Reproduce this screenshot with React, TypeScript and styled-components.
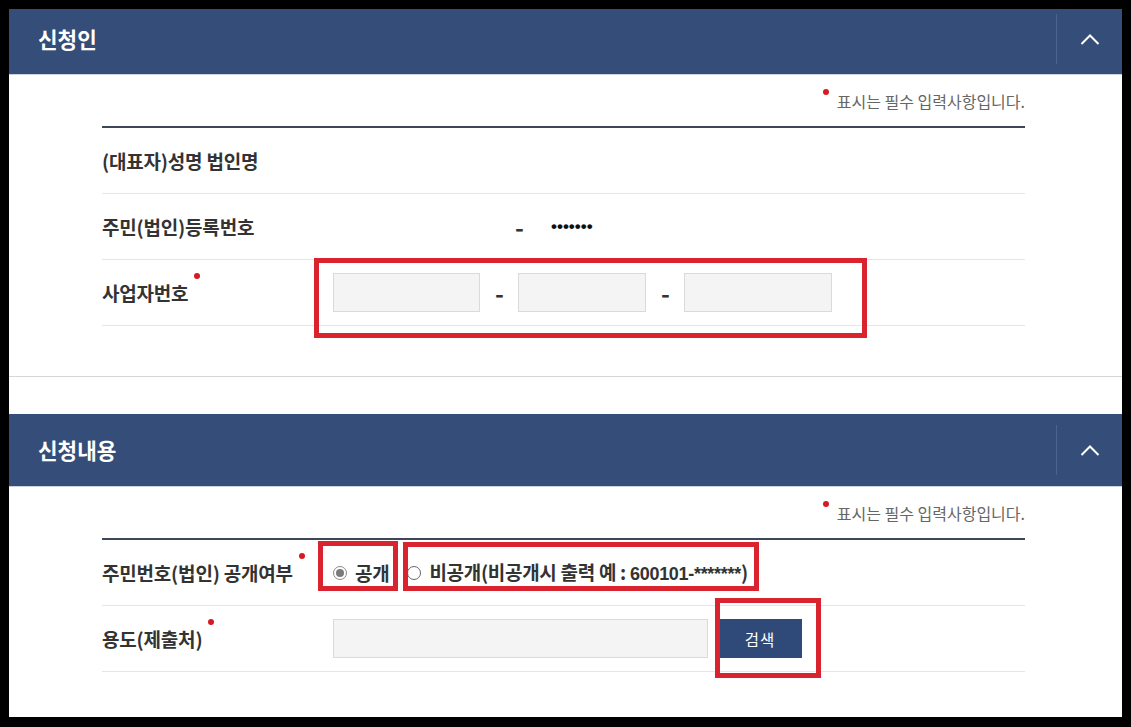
import React from "react";
import styled, { createGlobalStyle } from "styled-components";

const GlobalStyle = createGlobalStyle`
  html, body { margin: 0; padding: 0; background: #000; }
  body { font-family: "Noto Sans CJK KR", "Noto Sans", sans-serif; }
  * { box-sizing: border-box; }
`;

const Frame = styled.div`
  width: 1131px;
  height: 727px;
  padding: 9px 9px 10px 9px;
  background: #000;
`;

const Page = styled.div`
  height: 708px;
  background: #fff;
  overflow: hidden;
`;

const Section = styled.section<{ $gap?: number }>`
  margin-top: ${(p) => p.$gap ?? 0}px;
`;

const Header = styled.div<{ $h: number; $shift: number }>`
  height: ${(p) => p.$h + 1}px;
  background: #354d79;
  border-bottom: 1px solid #c9d3e3;
  display: flex;
  align-items: center;
  justify-content: space-between;
  padding-left: 29px;
  padding-bottom: ${(p) => p.$shift}px;
`;

const Title = styled.h2`
  margin: 0;
  color: #fff;
  font-size: 21.3px;
  font-weight: 700;
  letter-spacing: 0;
  line-height: 28px;
`;

const Toggle = styled.button`
  width: 66px;
  height: 50px;
  border: 0;
  border-left: 1px solid #4d638c;
  background: transparent;
  display: flex;
  align-items: center;
  justify-content: center;
  padding: 0;
  cursor: pointer;
`;

const Body = styled.div<{ $bottom: number; $line?: boolean }>`
  padding: 0 97px ${(p) => p.$bottom}px 93px;
  border-bottom: ${(p) => (p.$line ? "1px solid #d6d6d6" : "0")};
`;

const Note = styled.div`
  height: 51px;
  display: flex;
  align-items: center;
  justify-content: flex-end;
  font-size: 16px;
  color: #666;
  letter-spacing: 0;
`;

const NoteText = styled.span`
  position: relative;
  line-height: 20px;
`;

const NoteDot = styled.span`
  position: absolute;
  left: -14px;
  top: -2px;
  width: 6px;
  height: 6px;
  border-radius: 50%;
  background: #d71920;
`;

const Table = styled.div`
  border-top: 2px solid #3d4757;
`;

const Row = styled.div`
  height: 66px;
  border-bottom: 1px solid #e6e6e6;
  display: grid;
  grid-template-columns: 231px 1fr;
  align-items: center;
`;

const Label = styled.div`
  position: relative;
  justify-self: start;
  font-size: 19px;
  font-weight: 700;
  color: #333;
  letter-spacing: -0.2px;
  line-height: 24px;
`;

const ReqDot = styled.span`
  position: absolute;
  right: -12px;
  top: -8px;
  width: 6px;
  height: 6px;
  border-radius: 50%;
  background: #d71920;
`;

const Value = styled.div`
  display: flex;
  align-items: center;
`;

const Hidden = styled.span`
  width: 182px;
`;

const Dash = styled.span`
  width: 8px;
  font-size: 24px;
  font-weight: 700;
  color: #333;
  text-align: center;
  line-height: 24px;
`;

const Dots = styled.span`
  margin-left: 28px;
  font-family: "Liberation Sans", Arial, sans-serif;
  font-size: 17px;
  font-weight: 700;
  color: #111;
  letter-spacing: 0;
`;

const Highlight = styled.div`
  position: relative;
  display: flex;
  align-items: center;
`;

const Mark = styled.span<{ $t: number; $l: number; $r: number; $b: number }>`
  position: absolute;
  top: ${(p) => p.$t}px;
  left: ${(p) => p.$l}px;
  right: ${(p) => p.$r}px;
  bottom: ${(p) => p.$b}px;
  border: 5px solid #d9232e;
  pointer-events: none;
`;

const Inputs = styled.div`
  display: flex;
  align-items: center;
  gap: 15px;
`;

const Field = styled.input<{ $w: number }>`
  width: ${(p) => p.$w}px;
  height: 39px;
  background: #f4f4f4;
  border: 1px solid #dadada;
  border-radius: 0;
  padding: 0 10px;
  font-size: 15px;
  outline: none;
`;

const Radios = styled.div`
  display: flex;
  align-items: center;
  gap: 18px;
`;

const RadioItem = styled.label`
  display: flex;
  align-items: center;
  gap: 8px;
  font-size: 19px;
  font-weight: 700;
  color: #333;
  letter-spacing: -0.3px;
  line-height: 24px;
`;

const Num = styled.span`
  font-family: "Liberation Sans", Arial, sans-serif;
  font-size: 18px;
  letter-spacing: -0.3px;
`;

const Circle = styled.span<{ $on?: boolean }>`
  width: 14px;
  height: 14px;
  border-radius: 50%;
  border: 1px solid ${(p) => (p.$on ? "#8a8a8a" : "#666")};
  background: #fff;
  display: flex;
  align-items: center;
  justify-content: center;
  &::after {
    content: "";
    width: 8px;
    height: 8px;
    border-radius: 50%;
    background: ${(p) => (p.$on ? "#7a7a7a" : "transparent")};
  }
`;

const Search = styled.button`
  width: 84px;
  height: 39px;
  border: 0;
  background: #2f4a78;
  color: #fff;
  font-family: "Noto Sans CJK KR", sans-serif;
  font-size: 15.5px;
  letter-spacing: 1px;
  cursor: pointer;
`;

const SearchLine = styled.div`
  display: flex;
  align-items: center;
  gap: 10px;
`;

const Chevron = () => (
  <svg width="20" height="12" viewBox="0 0 20 12" fill="none">
    <polyline points="1.5,11 10,2.5 18.5,11" stroke="#fff" strokeWidth="2" />
  </svg>
);

const RequiredNote = () => (
  <Note>
    <NoteText>
      <NoteDot />
      표시는 필수 입력사항입니다.
    </NoteText>
  </Note>
);

export default function App() {
  return (
    <>
      <GlobalStyle />
      <Frame>
        <Page>
          <Section>
            <Header $h={65} $shift={5}>
              <Title>신청인</Title>
              <Toggle aria-label="접기">
                <Chevron />
              </Toggle>
            </Header>
            <Body $bottom={50} $line>
              <RequiredNote />
              <Table>
                <Row>
                  <Label>(대표자)성명 법인명</Label>
                  <Value />
                </Row>
                <Row>
                  <Label>주민(법인)등록번호</Label>
                  <Value>
                    <Hidden />
                    <Dash>-</Dash>
                    <Dots>•••••••</Dots>
                  </Value>
                </Row>
                <Row>
                  <Label>
                    사업자번호
                    <ReqDot />
                  </Label>
                  <Value>
                    <Highlight>
                      <Inputs>
                        <Field $w={147} />
                        <Dash>-</Dash>
                        <Field $w={128} />
                        <Dash>-</Dash>
                        <Field $w={148} />
                      </Inputs>
                      <Mark $t={-15} $l={-19} $r={-35} $b={-26} />
                    </Highlight>
                  </Value>
                </Row>
              </Table>
            </Body>
          </Section>
          <Section $gap={37}>
            <Header $h={72} $shift={1}>
              <Title>신청내용</Title>
              <Toggle aria-label="접기">
                <Chevron />
              </Toggle>
            </Header>
            <Body $bottom={0}>
              <RequiredNote />
              <Table>
                <Row>
                  <Label>
                    주민번호(법인) 공개여부
                    <ReqDot />
                  </Label>
                  <Value>
                    <Radios>
                      <Highlight>
                        <RadioItem>
                          <Circle $on />
                          공개
                        </RadioItem>
                        <Mark $t={-20} $l={-15} $r={-9} $b={-6} />
                      </Highlight>
                      <Highlight>
                        <RadioItem>
                          <Circle />
                          <span>
                            비공개(비공개시 출력 예 : <Num>600101-*******</Num>)
                          </span>
                        </RadioItem>
                        <Mark $t={-18} $l={-4} $r={-11} $b={-5} />
                      </Highlight>
                    </Radios>
                  </Value>
                </Row>
                <Row>
                  <Label>
                    용도(제출처)
                    <ReqDot />
                  </Label>
                  <Value>
                    <SearchLine>
                      <Field $w={375} />
                      <Highlight>
                        <Search>검색</Search>
                        <Mark $t={-21} $l={-3} $r={-19} $b={-20} />
                      </Highlight>
                    </SearchLine>
                  </Value>
                </Row>
              </Table>
            </Body>
          </Section>
        </Page>
      </Frame>
    </>
  );
}
